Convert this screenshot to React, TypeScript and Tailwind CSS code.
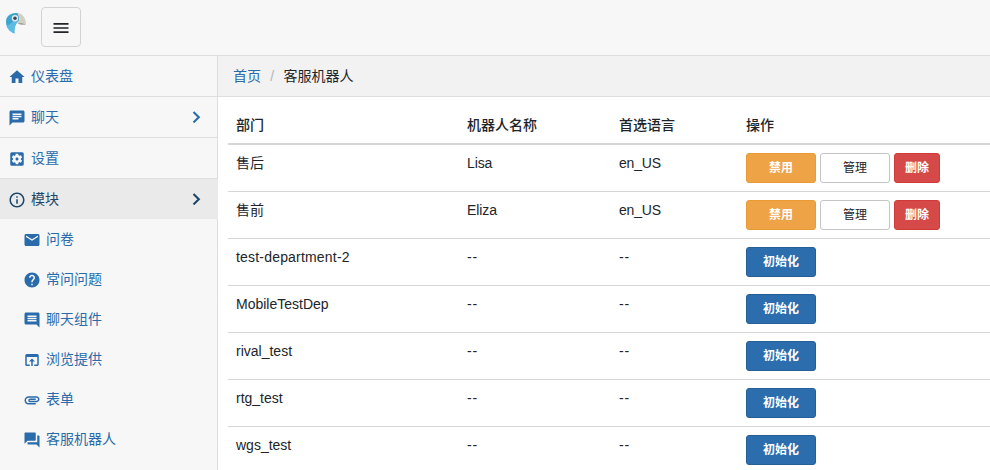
import React from "react";
import {
  MdHome, MdChat, MdSettingsApplications, MdInfoOutline, MdEmail, MdHelp, MdComment,
  MdOpenInBrowser, MdAttachment, MdQuestionAnswer, MdMenu,
} from "react-icons/md";
import type { IconType } from "react-icons";

const sections: { label: string; icon: IconType; arrow?: boolean; active?: boolean }[] = [
  { label: "仪表盘", icon: MdHome },
  { label: "聊天", icon: MdChat, arrow: true },
  { label: "设置", icon: MdSettingsApplications },
  { label: "模块", icon: MdInfoOutline, arrow: true, active: true },
];

const modules: { label: string; icon: IconType }[] = [
  { label: "问卷", icon: MdEmail },
  { label: "常问问题", icon: MdHelp },
  { label: "聊天组件", icon: MdComment },
  { label: "浏览提供", icon: MdOpenInBrowser },
  { label: "表单", icon: MdAttachment },
  { label: "客服机器人", icon: MdQuestionAnswer },
];

const rows: { dep: string; bot?: string; lang?: string; spacing?: string }[] = [
  { dep: "售后", bot: "Lisa", lang: "en_US" },
  { dep: "售前", bot: "Eliza", lang: "en_US" },
  { dep: "test-department-2", spacing: "tracking-[0.19px]" },
  { dep: "MobileTestDep" },
  { dep: "rival_test" },
  { dep: "rtg_test" },
  { dep: "wgs_test" },
];

const cols = "grid grid-cols-[231px_152px_127px_1fr] px-2";
const button = "h-[30px] rounded-[3px] border text-xs leading-[18px]";

function Logo() {
  return (
    <svg className="h-[22px] w-[22px]" viewBox="0 0 22 22">
      <path d="M1 10C1 4.500 5 1 10.500 1c2 0 3 .4 3.500 1.500V9c-3 1.500-5 6-4.500 12.500C5 20 1 15.500 1 10Z" fill="#3da5cf" />
      <path d="M1.500 13.500C5 13 8 10 8.500 8H14c-3 2-5 7-4.500 13.500C5.500 20 2.500 17 1.500 13.500Z" fill="#5cbce4" />
      <path d="M12.500 1.300C17.500 1.300 21 6 21 12.500c-2.500-1.500-5-2-8.500-1.300L14.500 7Z" fill="#d3d0c0" />
      <path d="M12.500 11.200c3.500-.7 6-.2 8.500 1.300-3 .5-6 .3-8.500-1.300Z" fill="#a3a09c" />
      <circle cx="10" cy="6.300" r="3.200" fill="#dfe5ea" />
      <circle cx="10" cy="6.300" r="1.700" fill="#3d4652" />
    </svg>
  );
}

function Arrow() {
  return (
    <svg className="mr-4 h-3 w-[9px]" viewBox="0 0 9 12" fill="none">
      <path d="M1.500 1 6.800 6.200 1.500 11.400" stroke="currentColor" strokeWidth="2.100" />
    </svg>
  );
}

export default function App() {
  return (
    <div className="flex h-[470px] w-[990px] flex-col overflow-hidden bg-white font-['Liberation_Sans','Noto_Sans_CJK_SC',sans-serif] text-sm leading-5 text-[#212529]">
      <header className="flex h-14 shrink-0 border-b border-[#dedede] bg-[#f7f7f7] pt-[7px] pl-[5px]">
        <div className="pt-[5px]"><Logo /></div>
        <button className="ml-[14px] flex h-10 w-10 items-center justify-center rounded border border-[#d3d3d3]">
          <MdMenu size={20} className="mt-[2px]" />
        </button>
      </header>
      <div className="flex min-h-0 flex-1">
        <nav className="w-[218px] shrink-0 border-r border-[#dedede] bg-[#f7f7f7] text-[#2a6cab]">
          {sections.map(({ label, icon: Icon, arrow, active }) => (
            <a
              key={label}
              className={
                active
                  ? "-mr-px flex h-10 items-center bg-[#eaeaea] pr-px pl-2 text-[#1c4669]"
                  : "flex h-[41px] items-center border-b border-[#dedede] pl-2"
              }
            >
              <Icon size={18} className="mt-[2px]" />
              <span className="ml-[5px] flex-1">{label}</span>
              {arrow && <Arrow />}
            </a>
          ))}
          {modules.map(({ label, icon: Icon }) => (
            <a key={label} className="flex h-10 items-center pl-[23px]">
              <Icon size={18} className="mt-[2px]" />
              <span className="ml-[5px]">{label}</span>
            </a>
          ))}
        </nav>
        <main className="flex min-w-0 flex-1 flex-col">
          <div className="flex h-[41px] shrink-0 items-center border-b border-[#dedede] bg-[#f2f2f2] pl-[15px]">
            <a className="text-[#2a6cab]">首页</a>
            <span className="w-[22.5px] text-center text-[#b5b5b5]">/</span>
            <span>客服机器人</span>
          </div>
          <div className="min-h-0 flex-1 overflow-hidden pt-2.5 pl-2.5">
            <div className={`${cols} h-[38px] items-center border-b-2 border-[#d6d6d6] font-medium`}>
              <span>部门</span><span>机器人名称</span><span>首选语言</span><span>操作</span>
            </div>
            {rows.map((r) => (
              <div key={r.dep} className={`${cols} h-[47px] border-b border-[#d6d6d6] pt-2`}>
                <span className={r.spacing}>{r.dep}</span>
                <span className={r.bot ? "tracking-[-0.1px]" : "tracking-[0.8px]"}>{r.bot ?? "--"}</span>
                <span className={r.lang ? "tracking-[-0.2px]" : "tracking-[0.8px]"}>{r.lang ?? "--"}</span>
                <div className="flex gap-1">
                  {r.bot ? (
                    <>
                      <button className={`${button} w-[70px] border-[#eb9b34] bg-[#efa347] font-bold text-white`}>禁用</button>
                      <button className={`${button} w-[70px] border-[#c4c4c4] bg-white`}>管理</button>
                      <button className={`${button} w-[46px] border-[#d13a38] bg-[#d54a48] font-bold text-white`}>删除</button>
                    </>
                  ) : (
                    <button className={`${button} w-[70px] border-[#265f97] bg-[#2b6dad] font-bold text-white`}>初始化</button>
                  )}
                </div>
              </div>
            ))}
          </div>
        </main>
      </div>
    </div>
  );
}
